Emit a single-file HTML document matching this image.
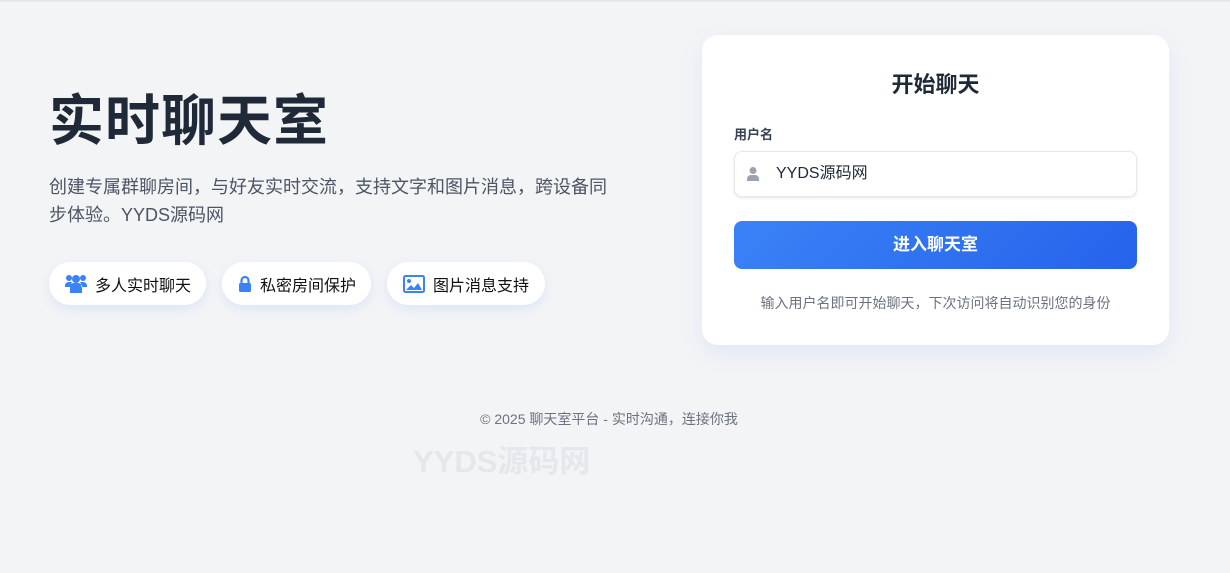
<!DOCTYPE html>
<html><head><meta charset="utf-8"><style>
*{margin:0;padding:0;box-sizing:border-box}
body{width:1230px;height:573px;background:#f3f4f6;font-family:"Liberation Sans","Noto Sans CJK SC",sans-serif;position:relative;overflow:hidden}
.tl{position:absolute;left:0;top:0;width:1230px;height:2px;background:#e5e7eb}
.t{position:absolute;left:49px;top:76px;font-size:55px;font-weight:700;color:#1f2937;letter-spacing:1px}
.s{position:absolute;left:49px;top:173px;width:570px;font-size:18px;line-height:28px;color:#4b5563}
.p{position:absolute;top:262px;height:43px;border-radius:22px;background:#fff;box-shadow:0 4px 12px rgba(59,130,246,.12);display:flex;align-items:center;padding-left:16px;font-size:16px;color:#111}
.p svg{margin-right:8px}
.card{position:absolute;left:702px;top:35px;width:467px;height:310px;background:#fff;border-radius:16px;box-shadow:0 8px 24px rgba(59,130,246,.1)}
.ct{position:absolute;top:32px;width:100%;text-align:center;font-size:22px;font-weight:700;color:#1f2937}
.lb{position:absolute;left:32px;top:89px;font-size:13px;font-weight:700;color:#374151}
.in{position:absolute;left:32px;top:116px;width:403px;height:46px;border:1px solid #e5e7eb;border-radius:8px;box-shadow:0 1px 3px rgba(0,0,0,.1);font-size:16px;color:#1f2937;line-height:44px;padding-left:41px}
.in svg{position:absolute;left:12px;top:15px}
.bt{position:absolute;left:32px;top:186px;width:403px;height:48px;border-radius:8px;background:linear-gradient(135deg,#3b82f6,#2563eb);color:#fff;font-size:17px;font-weight:700;text-align:center;line-height:48px}
.h{position:absolute;top:258px;width:100%;text-align:center;font-size:14px;color:#6b7280}
.f{position:absolute;left:0;width:1218px;top:409px;text-align:center;font-size:14px;color:#6b7280}
.w{position:absolute;left:413px;top:436px;font-size:31px;font-weight:700;color:#e5e7eb}
</style></head><body>
<div class="tl"></div>
<div class="t">实时聊天室</div>
<div class="s">创建专属群聊房间，与好友实时交流，支持文字和图片消息，跨设备同步体验。YYDS源码网</div>
<div class="p" style="left:49px;width:157px"><svg width="22" height="20" viewBox="0 0 22 20" fill="#3b82f6"><circle cx="4" cy="4" r="3"/><circle cx="18" cy="4" r="3"/><circle cx="11" cy="5" r="4"/><path d="M0 13a4 4 0 0 1 4-5h3a5 5 0 0 0-1 3v2z M22 13a4 4 0 0 0-4-5h-3a5 5 0 0 1 1 3v2z M5 19v-6a4 4 0 0 1 4-4h4a4 4 0 0 1 4 4v6z"/></svg>多人实时聊天</div>
<div class="p" style="left:222px;width:149px"><svg width="14" height="18" viewBox="0 0 14 18"><path d="M3.5 8V5.5a3.5 3.5 0 0 1 7 0V8" fill="none" stroke="#3b82f6" stroke-width="2.2"/><rect x="1" y="8" width="12" height="9" rx="1.5" fill="#3b82f6"/></svg>私密房间保护</div>
<div class="p" style="left:387px;width:158px"><svg width="22" height="18" viewBox="0 0 22 18"><rect x="1" y="1" width="20" height="16" rx="1.5" fill="none" stroke="#3b82f6" stroke-width="2"/><circle cx="6" cy="6" r="2" fill="#3b82f6"/><path d="M3 15l5-5 3 3 4-5 4 7z" fill="#3b82f6"/></svg>图片消息支持</div>
<div class="card">
<div class="ct">开始聊天</div>
<div class="lb">用户名</div>
<div class="in"><svg width="12" height="14" viewBox="0 0 12 14" fill="#9ca3af"><circle cx="6" cy="3.5" r="3.5"/><path d="M0 14v-2a4 4 0 0 1 4-4h4a4 4 0 0 1 4 4v2z"/></svg>YYDS源码网</div>
<div class="bt">进入聊天室</div>
<div class="h">输入用户名即可开始聊天，下次访问将自动识别您的身份</div>
</div>
<div class="f">© 2025 聊天室平台 - 实时沟通，连接你我</div>
<div class="w">YYDS源码网</div>
</body></html>
